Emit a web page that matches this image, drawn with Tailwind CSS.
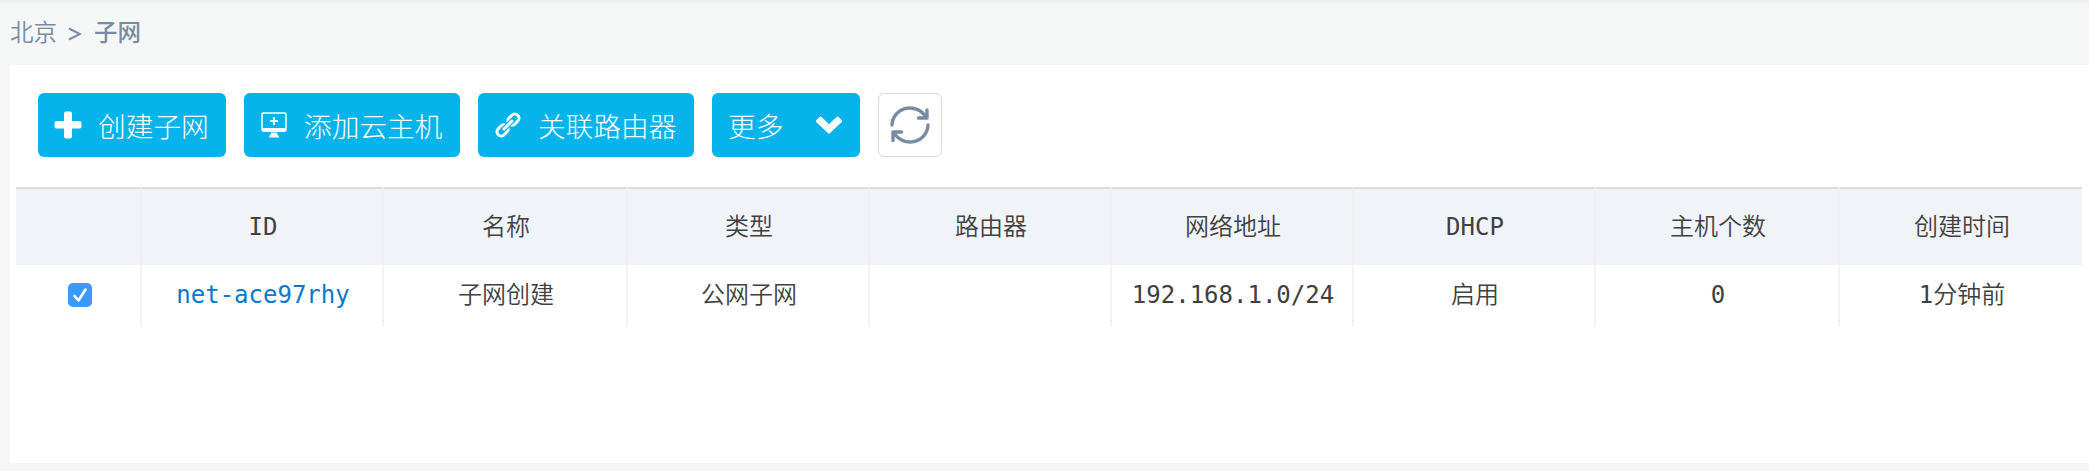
<!DOCTYPE html>
<html lang="zh-CN">
<head>
<meta charset="utf-8">
<title>子网</title>
<script src="https://cdn.jsdelivr.net/npm/@tailwindcss/browser@4"></script>
</head>
<body class="bg-[#f5f7f7] h-[471px] overflow-hidden font-['DejaVu_Sans_Mono','Noto_Sans_CJK_SC',monospace] text-[#404040] border-t-2 border-[#edf0f0]">
<nav class="h-[63px] pl-[10px] pt-[12px] flex items-start text-[23.5px] leading-[34px] text-[#778ca2] whitespace-nowrap">
<span class="font-['Noto_Sans_CJK_SC',sans-serif] font-[350]">北京</span><svg class="w-[14px] h-[14px] ml-[11px] mt-[13px]" viewBox="0 0 14 14" fill="none" stroke="#778ca2" stroke-width="2"><path d="M1 1.500L12 7L1 12.500"/></svg><span class="ml-[12px] font-['Noto_Sans_CJK_SC',sans-serif] font-medium">子网</span>
</nav>
<main class="ml-[10px] h-[398px] bg-white pl-[6px] pr-[7px] pt-[28px]">
<div class="flex gap-[18px] pl-[22px] h-[64px] font-['Noto_Sans_CJK_SC',sans-serif] font-light text-[27.7px] leading-[64px] text-white whitespace-nowrap">
<button class="w-[188px] rounded-md bg-[#06b4eb] flex items-center pl-[16px]">
<svg class="w-[28px] h-[28px] mb-[1px] shrink-0" viewBox="0 0 28 28" fill="#fff"><rect x="10" y="0.5" width="8" height="27" rx="2"/><rect x="0.5" y="10" width="27" height="7.5" rx="2"/></svg>
<span class="ml-[16px]">创建子网</span></button>
<button class="w-[216px] rounded-md bg-[#06b4eb] flex items-center pl-[17px]">
<svg class="w-[26px] h-[26px] shrink-0" viewBox="0 0 26 26"><rect x="1" y="1" width="24" height="18" rx="1.5" fill="none" stroke="#fff" stroke-width="1.5"/><path d="M1 16h24v2a2 2 0 0 1-2 2H3a2 2 0 0 1-2-2z" fill="#fff"/><path d="M10 20.500h6l.5 2.500 1.500 1v1.500H8V24l1.500-1z" fill="#fff"/><path d="M13 5v8M9 9h8" stroke="#fff" stroke-width="2"/></svg>
<span class="ml-[17px]">添加云主机</span></button>
<button class="w-[216px] rounded-md bg-[#06b4eb] flex items-center pl-[17px]">
<svg class="w-[26px] h-[26px] shrink-0" viewBox="0 0 26 26" fill="none"><g transform="rotate(-45 13 13)"><rect x="-0.8" y="8.800" width="12.300" height="8.400" rx="4.200" stroke="#fff" stroke-width="3"/><rect x="14.500" y="8.800" width="12.300" height="8.400" rx="4.200" stroke="#fff" stroke-width="3"/><path d="M7.500 13H18.500" stroke="#06b4eb" stroke-width="5.200" stroke-linecap="round"/><path d="M7.500 13H18.500" stroke="#fff" stroke-width="3" stroke-linecap="round"/></g></svg>
<span class="ml-[17px]">关联路由器</span></button>
<button class="w-[148px] rounded-md bg-[#06b4eb] flex items-center pl-[16px]">
<span>更多</span>
<svg class="ml-[32px] w-[28px] h-[20px] shrink-0" viewBox="0 0 28 20"><path d="M1.200 5.200L4.500 1.900Q5.500 1 6.500 1.900L14 9.200L21.500 1.900Q22.500 1 23.500 1.900L26.800 5.200Q27.700 6.100 26.800 7.100L14 19L1.200 7.100Q.3 6.100 1.200 5.200Z" fill="#fff"/></svg></button>
<button class="w-[64px] rounded-md border border-[#d8dadc] flex items-center justify-center">
<svg class="w-[40px] h-[40px] mr-px" viewBox="0 0 40 40" fill="none" stroke="#778ca2" stroke-width="3.400" stroke-linecap="round" stroke-linejoin="round"><path d="M2 20A18 17.500 0 0 1 36 12.500M37 5V13H28.500M38 20A18 17.500 0 0 1 4 27.500M3 35.500V27H11.500"/></svg></button>
</div>
<table class="mt-[30px] w-[2066px] table-fixed border-separate border-spacing-0 text-center text-[24px] leading-[32px] font-[350] whitespace-nowrap">
<colgroup><col class="w-[126px]"><col class="w-[242px]"><col class="w-[244px]"><col class="w-[242px]"><col class="w-[242px]"><col class="w-[242px]"><col class="w-[242px]"><col class="w-[244px]"><col class="w-[242px]"></colgroup>
<thead><tr class="h-[78px] bg-[#f0f3f8] [&>th]:p-0 [&>th]:pt-[4px] [&>th]:pl-[2px] [&>th]:font-[350] [&>th]:border-t-2 [&>th]:border-t-[#dadcdd] [&>th]:border-b-4 [&>th]:border-b-[#f2f3f6] [&>th:not(:last-child)]:border-r-2 [&>th]:border-r-[#eeeff1]">
<th></th><th>ID</th><th>名称</th><th>类型</th><th>路由器</th><th>网络地址</th><th>DHCP</th><th>主机个数</th><th>创建时间</th></tr></thead>
<tbody><tr class="h-[62px] [&>td]:p-0 [&>td]:pb-[2px] [&>td]:pl-[2px] [&>td:not(:last-child)]:border-r-2 [&>td]:border-[#f3f3f4]">
<td><svg class="w-[24px] h-[24px] ml-[50px]" viewBox="0 0 24 24"><rect width="24" height="24" rx="5" fill="#3b99fc"/><path d="M6.500 13L10.500 17.500L17.500 6.500" fill="none" stroke="#fff" stroke-width="2.600" stroke-linecap="round" stroke-linejoin="round"/></svg></td>
<td class="text-[#0479cf]">net-ace97rhy</td><td>子网创建</td><td>公网子网</td><td></td><td>192.168.1.0/24</td><td>启用</td><td>0</td><td>1分钟前</td></tr></tbody>
</table>
</main>
</body>
</html>
